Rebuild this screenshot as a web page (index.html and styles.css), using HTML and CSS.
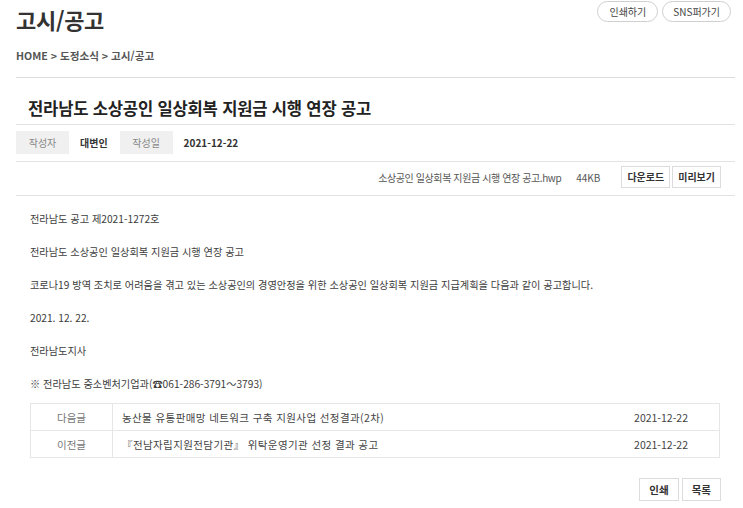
FILE: index.html
```html
<!DOCTYPE html>
<html lang="ko">
<head>
<meta charset="utf-8">
<link rel="stylesheet" href="styles.css">
</head>
<body>
<div class="page">
  <div class="head">
    <h1 class="page-title">고시/공고</h1>
    <div class="pills">
      <span class="pill">인쇄하기</span>
      <span class="pill">SNS퍼가기</span>
    </div>
  </div>
  <div class="crumb">HOME &gt; 도정소식 &gt; 고시/공고</div>

  <h2 class="post-title">전라남도 소상공인 일상회복 지원금 시행 연장 공고</h2>

  <div class="meta">
    <span class="meta-label">작성자</span>
    <span class="meta-value">대변인</span>
    <span class="meta-label">작성일</span>
    <span class="meta-value">2021-12-22</span>
  </div>

  <div class="files">
    <span class="file-name">소상공인 일상회복 지원금 시행 연장 공고.hwp</span>
    <span class="file-size">44KB</span>
    <span class="btn">다운로드</span>
    <span class="btn">미리보기</span>
  </div>

  <div class="content">
    <p>전라남도 공고 제2021-1272호</p>
    <p>전라남도 소상공인 일상회복 지원금 시행 연장 공고</p>
    <p>코로나19 방역 조치로 어려움을 겪고 있는 소상공인의 경영안정을 위한 소상공인 일상회복 지원금 지급계획을 다음과 같이 공고합니다.</p>
    <p>2021. 12. 22.</p>
    <p>전라남도지사</p>
    <p>※ 전라남도 중소벤처기업과(☎061-286-3791～3793)</p>
  </div>

  <table class="nav">
    <tr>
      <th>다음글</th>
      <td class="nav-title">농산물 유통판매망 네트워크 구축 지원사업 선정결과(2차)</td>
      <td class="nav-date">2021-12-22</td>
    </tr>
    <tr>
      <th>이전글</th>
      <td class="nav-title">『전남자립지원전담기관』 위탁운영기관 선정 결과 공고</td>
      <td class="nav-date">2021-12-22</td>
    </tr>
  </table>

  <div class="actions">
    <span class="btn btn-lg">인쇄</span>
    <span class="btn btn-lg">목록</span>
  </div>
</div>
</body>
</html>
```

FILE: styles.css
```css
* { box-sizing: border-box; }
html, body { margin: 0; padding: 0; background: #fff; }
body {
  font-family: "Noto Sans CJK KR", "Noto Sans", sans-serif;
  color: #444;
  font-size: 12px;
}
.page {
  margin: 0 8px 0 16px;
}
.head {
  display: flex;
  justify-content: space-between;
  align-items: flex-start;
  height: 44px;
}
.page-title {
  margin: 0;
  padding-top: 2px;
  font-size: 22px;
  line-height: 34px;
  font-weight: 700;
  color: #333;
  letter-spacing: -0.3px;
}
.pills {
  display: flex;
  gap: 4px;
  padding-top: 1px;
  padding-right: 4px;
}
.pill {
  display: inline-block;
  height: 21px;
  line-height: 19px;
  padding: 0 11px;
  border: 1px solid #cfcfcf;
  border-radius: 11px;
  font-size: 10px;
  color: #444;
}
.pill + .pill { padding: 0 10px; }
.crumb {
  font-size: 10.6px;
  font-weight: 700;
  color: #555;
  line-height: 24px;
  padding-bottom: 9px;
  border-bottom: 1px solid #dcdcdc;
}
.post-title {
  margin: 0;
  padding: 17px 0 0 12px;
  height: 47px;
  font-size: 16.6px;
  line-height: 26px;
  font-weight: 700;
  color: #222;
  letter-spacing: -0.2px;
  border-bottom: 1px solid #e3e3e3;
}
.meta {
  display: flex;
  align-items: center;
  padding: 6px 0 7px;
  border-bottom: 1px solid #e3e3e3;
}
.meta-label {
  display: inline-block;
  width: 53px;
  height: 23px;
  line-height: 23px;
  text-align: center;
  background: #f0f0f0;
  color: #888;
  font-size: 10px;
}
.meta-value {
  font-weight: 700;
  color: #333;
  font-size: 10px;
  padding: 0 12px 0 11px;
}
.files {
  display: flex;
  align-items: center;
  justify-content: flex-end;
  padding: 4px 14px 7px 0;
  border-bottom: 1px solid #e3e3e3;
  font-size: 10px;
}
.file-name { color: #555; letter-spacing: -0.4px; }
.file-size { color: #555; margin: 0 21px 0 15px; }
.btn {
  display: inline-block;
  height: 22px;
  line-height: 20px;
  padding: 0 5px;
  border: 1px solid #dcdcdc;
  font-weight: 700;
  color: #333;
  font-size: 10px;
  background: #fff;
}
.files .btn:first-of-type { padding: 0 7px; }
.files .btn + .btn { margin-left: 2px; }
.content {
  padding: 6px 0 0 14px;
}
.content p {
  margin: 0;
  line-height: 33px;
  font-size: 10.2px;
  color: #3d3d3d;
}
.nav {
  margin: 3px 0 0 14px;
  width: 690px;
  border-collapse: collapse;
  font-size: 10.5px;
  border: 1px solid #e6e6e6;
}
.nav tr { height: 27px; }
.nav th {
  width: 82px;
  font-weight: 400;
  color: #777;
  text-align: center;
  border-right: 1px solid #e6e6e6;
  border-bottom: 1px solid #e6e6e6;
  padding: 0;
}
.nav td {
  border-bottom: 1px solid #e6e6e6;
  color: #444;
  padding: 0;
}
.nav-title { padding-left: 9px !important; letter-spacing: 0.4px; }
.nav-date { text-align: right; padding-right: 31px !important; }
.actions {
  display: flex;
  justify-content: flex-end;
  gap: 3px;
  margin: 20px 14px 0 0;
}
.btn-lg {
  height: 23px;
  line-height: 21px;
  padding: 0 9px;
  font-size: 10.5px;
}
```
